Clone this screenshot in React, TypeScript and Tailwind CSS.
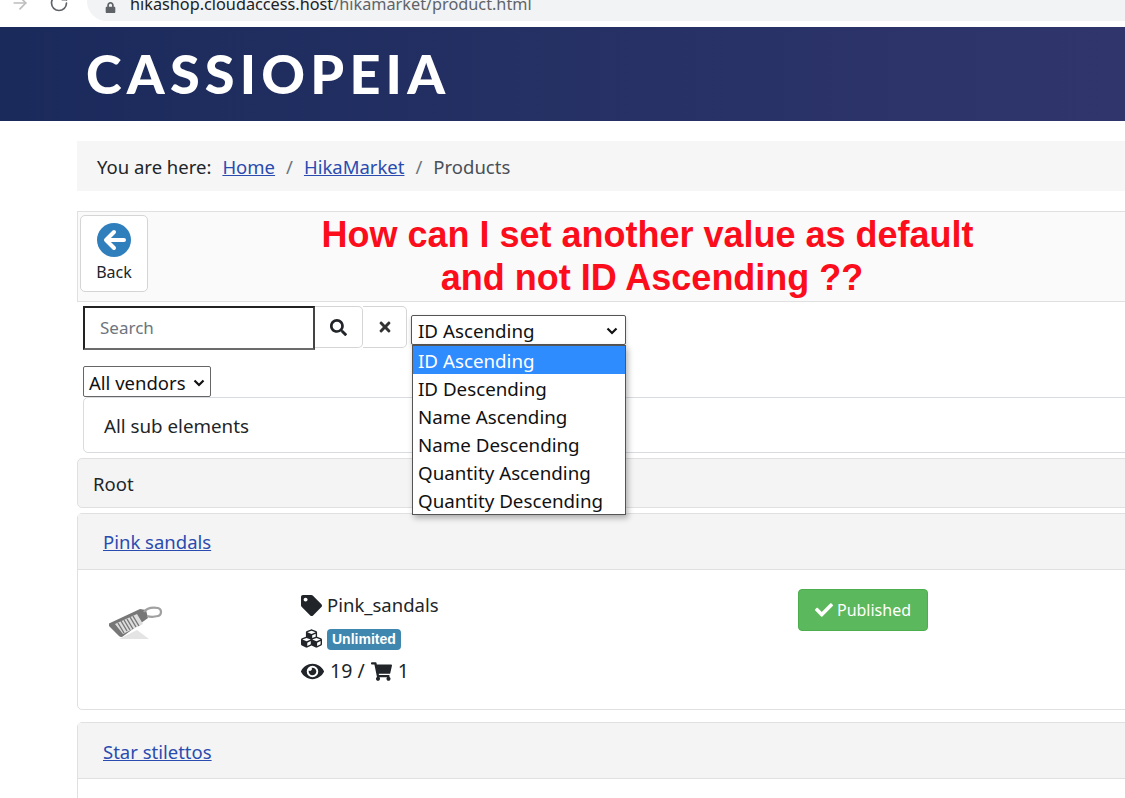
import { ArrowRight, RotateCw } from "lucide-react";
import { FaCheck, FaCubes, FaEye, FaLock, FaSearch, FaShoppingCart, FaTag, FaTimes } from "react-icons/fa";

const bodyFont = "font-['Noto_Sans',sans-serif]";
const linkClass = "text-[#2a4bb0] underline";
const options = ["ID Ascending", "ID Descending", "Name Ascending", "Name Descending", "Quantity Ascending", "Quantity Descending"];

function Chevron() {
  return (
    <svg width="12" height="8" viewBox="0 0 12 8" fill="none" stroke="#111" strokeWidth="2.2">
      <path d="M1.5 1.5 6 6l4.5-4.5" />
    </svg>
  );
}

function BackIcon() {
  return (
    <svg width="34" height="34" viewBox="0 0 34 34">
      <circle cx="17" cy="17" r="17" fill="#2f7fbd" />
      <path d="M27 17H10M17 9l-8 8 8 8" fill="none" stroke="#fff" strokeWidth="4" strokeLinecap="round" strokeLinejoin="round" />
    </svg>
  );
}

function TagPicture() {
  return (
    <svg width="54" height="36" viewBox="0 0 54 36">
      <path d="M10 35 40 35 28 26z" fill="#e4e4e4" />
      <path d="M1 19 31 5l6 1 2 8-26 19a3 3 0 0 1-3-1L0 22a2 2 0 0 1 1-3z" fill="#777" />
      <path d="M6 20 28 10l6 10-20 10z" fill="#ddd" />
      <path d="M9 19l6 10M12 17l6 10M15 16l6 10M18 15l6 10M21 13l6 10M24 12l6 10" stroke="#777" strokeWidth="1.4" />
      <path d="M35 8c2-3 7-5 14-4 4 1 4 7 0 8-4 1-8 1-11 0" fill="none" stroke="#a0a0a0" strokeWidth="2.2" />
    </svg>
  );
}

export default function App() {
  return (
    <div className={`h-[798px] w-[1125px] overflow-hidden bg-white text-[18.5px] text-[#212529] ${bodyFont}`}>
      {/* browser chrome, cut off at the top */}
      <div className="flex h-[27px] items-start overflow-hidden">
        <ArrowRight className="ml-[10px] mt-[-7px] text-[#bdbdbd]" size={20} />
        <RotateCw className="ml-[19px] mt-[-7px] text-[#5f6368]" size={20} />
        <div className="ml-[18px] flex h-[21px] flex-1 items-end rounded-bl-[20px] bg-[#f1f3f4] pb-[7px] pl-[18px] text-[16.25px] leading-[20px] text-[#5f6368]">
          <FaLock className="mb-[1px] mr-[14px]" size={11} />
          <span className="text-[#202124]">hikashop.cloudaccess.host</span>/hikamarket/product.html
        </div>
      </div>

      <header className="flex h-[94px] items-center bg-gradient-to-r from-[#1a2a5b] to-[#30366c] pl-[86px]">
        <span className="font-['Lato',sans-serif] text-[54px] font-black leading-none tracking-[5.2px] text-white">CASSIOPEIA</span>
      </header>

      <div className="ml-[77px] w-[1100px]">
        <nav className="mt-[20px] flex h-[50px] items-center bg-[#f6f6f6] pl-[20px] pt-[1px]">
          <span>You are here:</span>
          <a className={`ml-[11px] ${linkClass}`}>Home</a>
          <span className="mx-[11px] text-[#6c757d]">/</span>
          <a className={linkClass}>HikaMarket</a>
          <span className="mx-[11px] text-[#6c757d]">/</span>
          <span className="text-[#495057]">Products</span>
        </nav>

        <div className="mt-[20px] flex h-[91px] border border-[#e0e0e0] bg-[#fafafa] pl-[2px] pt-[3px]">
          <button className="flex h-[77px] w-[68px] flex-col items-center rounded-[5px] border border-[#d5d5d5] bg-white pt-[7px] text-[16px] leading-[24px]">
            <BackIcon />
            <span className="mt-[3px]">Back</span>
          </button>
          <h1 className="mt-[-2px] w-[999px] text-center font-['Liberation_Sans',sans-serif] text-[36px] font-bold leading-[43px] text-[#fb0d1b]">
            How can I set another value as default
            <br />
            <span className="ml-[9px]">and not ID Ascending ??</span>
          </h1>
        </div>

        <div className="ml-[6px]">
          <div className="mt-[4px] flex items-start">
            <div className="flex h-[44px] w-[232px] items-center border-2 border-[#222] border-b-[#6b6b6b] border-r-[#444] pl-[15px] text-[17px] text-[#6c757d]">Search</div>
            <button className="flex h-[42px] w-[48px] items-center justify-center rounded-r-[5px] border border-l-0 border-[#d5d5d5]">
              <FaSearch size={17} />
            </button>
            <button className="flex h-[42px] w-[44px] items-center justify-center rounded-r-[5px] border border-l-0 border-[#d5d5d5] text-[#333]">
              <FaTimes size={16} />
            </button>
            <div className="relative ml-[4px] mt-[9px] text-[18.75px]">
              <div className="flex h-[30px] w-[215px] items-center justify-between rounded-[2px] border border-[#555] pl-[6px] pr-[7px] pt-[2px] text-[#111] shadow-[0_2px_4px_rgba(0,0,0,0.2)]">
                ID Ascending
                <Chevron />
              </div>
              <ul className="absolute left-[1px] top-[30px] z-10 w-[214px] border border-[#555] bg-white text-[#111] shadow-[2px_3px_6px_rgba(0,0,0,0.3)]">
                {options.map((option, i) => (
                  <li key={option} className={`h-[28px] pl-[5px] pt-[1px] leading-[28px] ${i === 0 ? "bg-[#2f8cff] text-white" : ""}`}>
                    {option}
                  </li>
                ))}
              </ul>
            </div>
          </div>

          <div className="mt-[16px] flex h-[31px] w-[128px] items-center justify-between rounded-[2px] border border-[#666] pl-[5px] pr-[5px] pt-[2px] text-[#111]">
            All vendors
            <Chevron />
          </div>

          <div className="flex h-[56px] items-center rounded-l-[5px] border border-[#d8dbe0] pl-[20px] pt-[2px] text-[18.75px]">All sub elements</div>
        </div>

        <div className="mt-[5px] flex h-[50px] items-center rounded-l-[5px] border border-[#e0e0e0] bg-[#f4f4f4] pl-[15px] pt-[1px]">Root</div>

        <section className="mt-[5px] h-[197px] rounded-l-[5px] border border-[#e0e0e0]">
          <div className="flex h-[56px] items-center border-b border-[#e0e0e0] bg-[#f4f4f4] pl-[25px]">
            <a className={linkClass}>Pink sandals</a>
          </div>
          <div className="flex">
            <div className="ml-[31px] mt-[34px] w-[192px]">
              <TagPicture />
            </div>
            <div className="w-[497px] pt-[21px]">
              <div className="flex h-[28px] items-center gap-[5px]">
                <FaTag size={21} />
                Pink_sandals
              </div>
              <div className="mt-[8px] flex h-[24px] items-center gap-[5px]">
                <FaCubes className="mt-[-2px]" size={21} />
                <span className="rounded-[4px] bg-[#3f87ae] px-[5px] font-['Liberation_Sans',sans-serif] text-[14px] font-bold leading-[21px] text-white">Unlimited</span>
              </div>
              <div className="mt-[6px] flex h-[28px] items-center gap-[6px] text-[19.5px]">
                <FaEye size={23} />
                19 /
                <FaShoppingCart size={21} />
                1
              </div>
            </div>
            <div className="mt-[19px] flex h-[42px] w-[130px] items-center justify-center gap-[4px] rounded-[4px] border border-[#4cae4c] bg-[#5cb85c] text-[16px] text-white">
              <FaCheck size={18} />
              Published
            </div>
          </div>
        </section>

        <section className="mt-[12px] h-[100px] rounded-l-[5px] border border-[#e0e0e0]">
          <div className="flex h-[56px] items-center border-b border-[#e0e0e0] bg-[#f4f4f4] pl-[25px] pt-[2px]">
            <a className={linkClass}>Star stilettos</a>
          </div>
        </section>
      </div>
    </div>
  );
}
